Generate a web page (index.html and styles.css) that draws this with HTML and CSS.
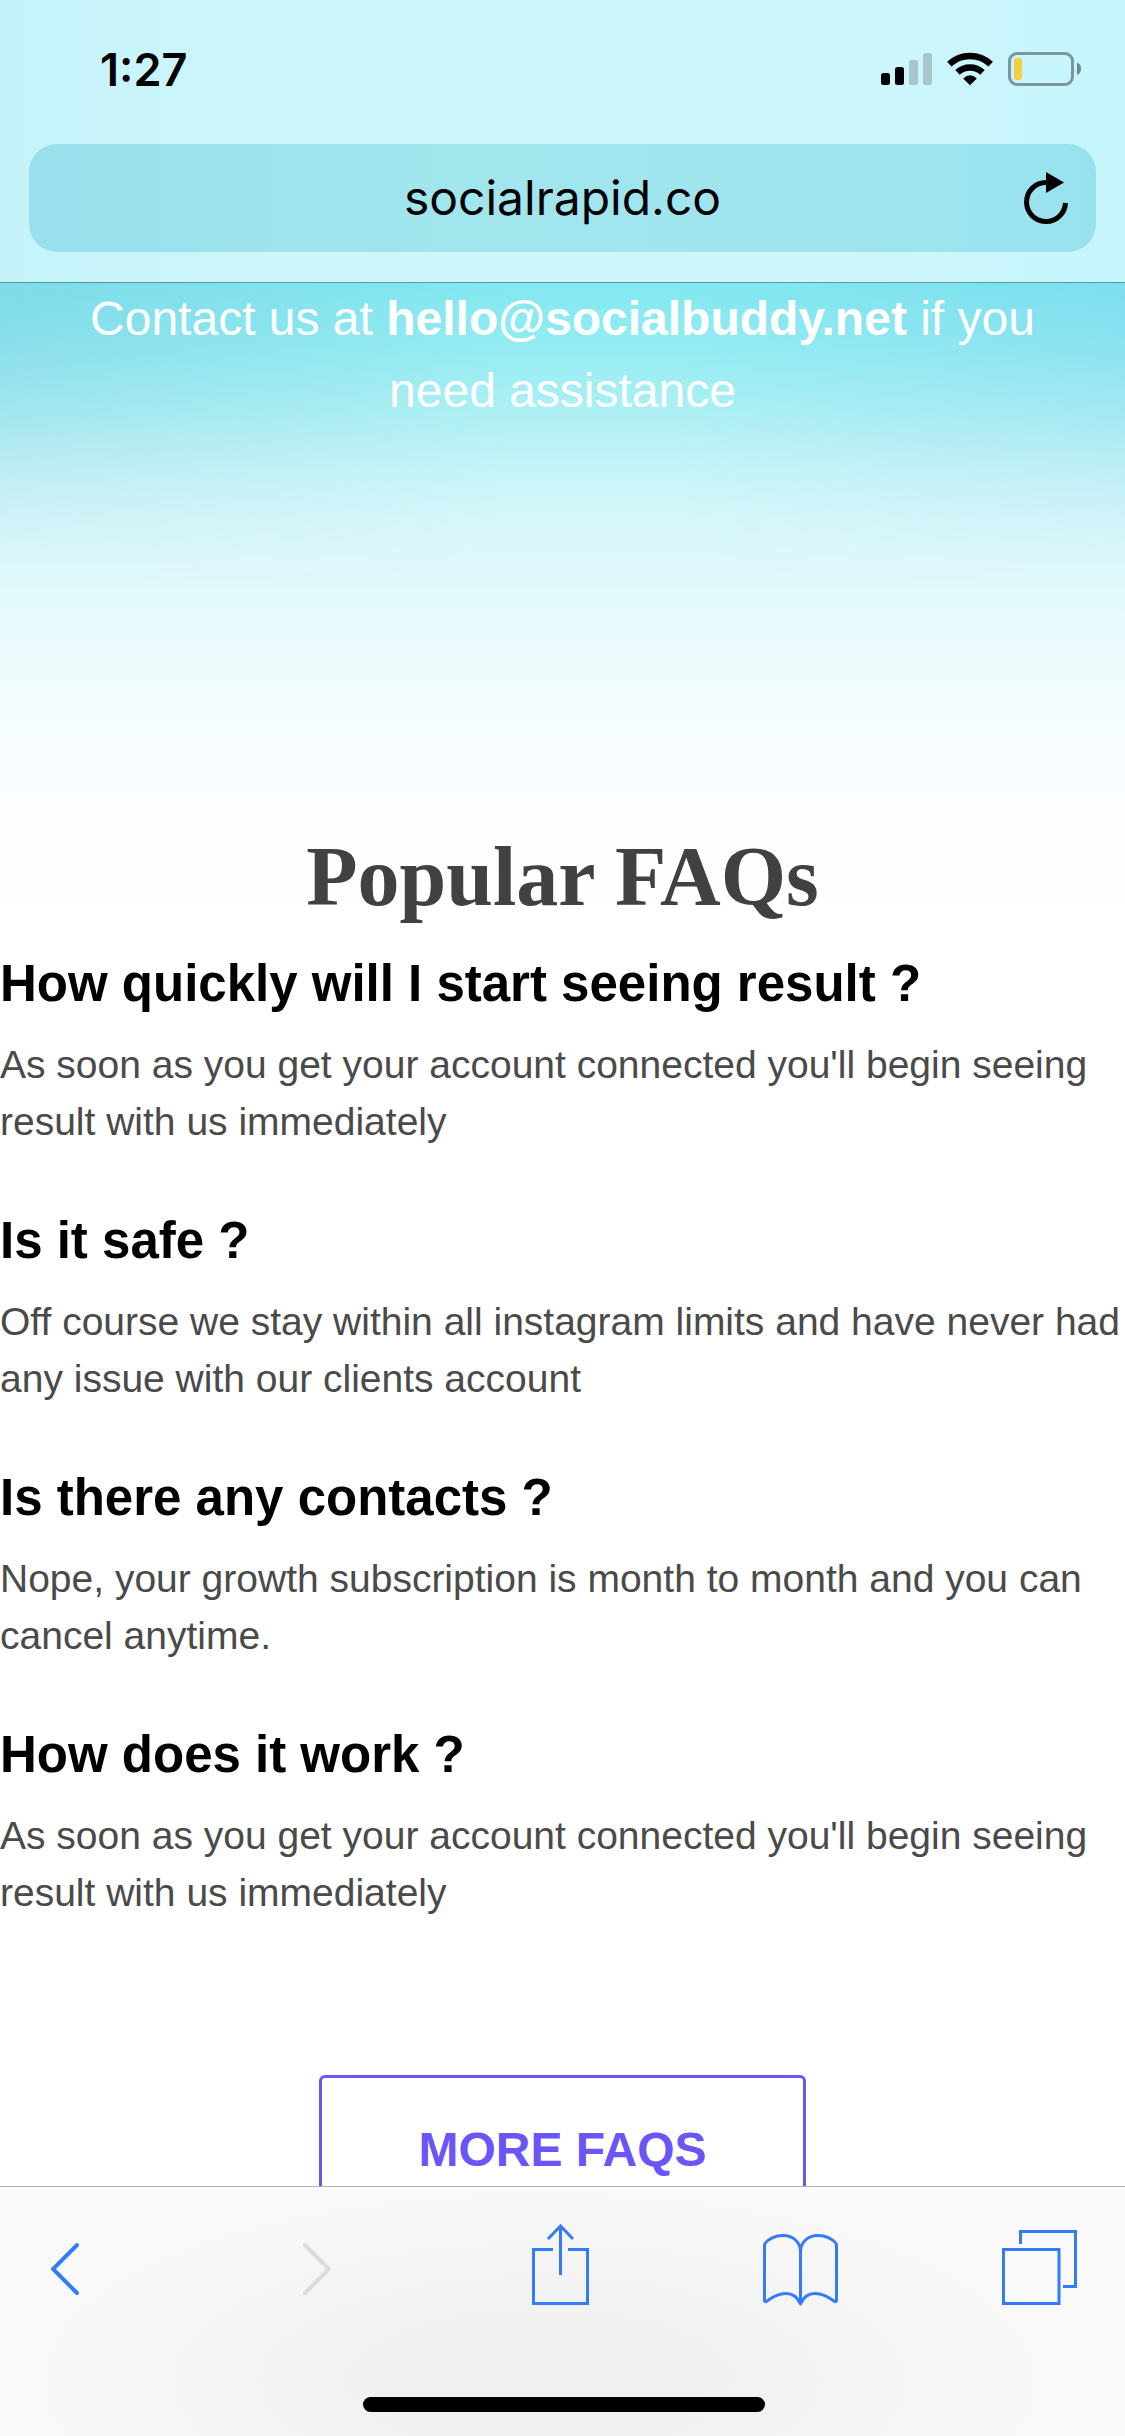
FILE: index.html
```html
<!DOCTYPE html>
<html lang="en">
<head>
<meta charset="utf-8">
<meta name="viewport" content="width=device-width, initial-scale=1">
<title>Popular FAQs</title>
<link rel="stylesheet" href="styles.css">
</head>
<body class="screen">
<header class="browser-top">
  <div class="status-bar">
    <time class="clock">1:27</time>
    <div class="status-icons">
      <svg width="51" height="34" viewBox="0 0 51 34" role="img" aria-label="Signal">
        <rect x="0" y="21" width="9" height="12" rx="2.5"/>
        <rect x="14" y="15" width="9" height="18" rx="2.5"/>
        <g fill="#a5c6cb"><rect x="28" y="8" width="9" height="25" rx="2.5"/><rect x="42" y="1" width="9" height="32" rx="2.5"/></g>
      </svg>
      <svg width="46" height="34" viewBox="0 0 46 34" role="img" aria-label="Wi-Fi">
        <g fill="none" stroke="#000" stroke-width="6.5"><path d="M2.3 12.2A30 30 0 0 1 43.700 12.200"/><path d="M10.500 20.300A18.500 18.500 0 0 1 35.500 20.300"/></g>
        <path d="M16.200 26.500Q23 20.200 29.800 26.500L23 33.300Z"/>
      </svg>
      <svg width="73" height="34" viewBox="0 0 73 34" role="img" aria-label="Battery low">
        <rect x="1.500" y="1.500" width="63" height="31" rx="7.500" fill="none" stroke="#7b979b" stroke-width="3"/>
        <rect x="6" y="6" width="8" height="22" rx="3" fill="#f8cd46"/>
        <path d="M69 10.500Q73 12 73 16.800T69 23Z" fill="#6f8b8f"/>
      </svg>
    </div>
  </div>
  <form class="address-bar">
    <input class="address" type="text" value="socialrapid.co" aria-label="Address">
    <button class="reload" type="button" aria-label="Reload">
      <svg width="44" height="52" viewBox="0 0 44 52"><path d="M23 10.500H22A19.500 19.500 0 1 0 41.500 31" fill="none" stroke="#000" stroke-width="5"/><path d="M22 0L40 10.500L22 21Z"/></svg>
    </button>
  </form>
</header>

<main class="page">
  <p class="contact">Contact us at <a class="contact-mail" href="mailto:hello@socialbuddy.net">hello@socialbuddy.net</a> if you need assistance</p>
  <section class="faqs">
    <h2 class="faqs-title">Popular FAQs</h2>
    <article class="faq">
      <h3 class="question">How quickly will I start seeing result ?</h3>
      <p class="answer">As soon as you get your account connected you'll begin seeing result with us immediately</p>
    </article>
    <article class="faq">
      <h3 class="question">Is it safe ?</h3>
      <p class="answer">Off course we stay within all instagram limits and have never had any issue with our clients account</p>
    </article>
    <article class="faq">
      <h3 class="question">Is there any contacts ?</h3>
      <p class="answer">Nope, your growth subscription is month to month and you can cancel anytime.</p>
    </article>
    <article class="faq">
      <h3 class="question">How does it work ?</h3>
      <p class="answer">As soon as you get your account connected you'll begin seeing result with us immediately</p>
    </article>
    <button class="more" type="button">MORE FAQS</button>
  </section>
</main>

<footer class="browser-bottom">
  <nav class="toolbar" aria-label="Browser">
    <button class="tool" type="button" aria-label="Back">
      <svg width="28" height="82" viewBox="0 0 28 82"><path d="M26 21L2 45L26 69" stroke-width="4" stroke-linecap="round"/></svg>
    </button>
    <button class="tool" type="button" aria-label="Forward" disabled>
      <svg width="28" height="82" viewBox="0 0 28 82"><path d="M2 21L26 45L2 69" stroke-width="4" stroke-linecap="round"/></svg>
    </button>
    <button class="tool" type="button" aria-label="Share">
      <svg width="57" height="82" viewBox="0 0 57 82"><path d="M21 25.500H1.500V79.500H55.500V25.500H36M28.500 51V2M16 15L28.500 2L41 15"/></svg>
    </button>
    <button class="tool" type="button" aria-label="Bookmarks">
      <svg width="75" height="82" viewBox="0 0 75 82"><path stroke-linejoin="round" d="M37.500 80V28C37.500 18 30 11.500 20 11.500C12 11.500 5 15 2 19.500Q1.500 20.500 1.500 22V76.500Q1.500 78.500 4 77C10 72.500 17 69.500 23 69.500C31 69.500 35 74 37.500 80C40 74 44 69.500 52 69.500C58 69.500 65 72.500 71 77Q73.500 78.500 73.500 76.500V22Q73.500 20.500 73 19.500C70 15 63 11.500 55 11.500C45 11.500 37.500 18 37.500 28"/></svg>
    </button>
    <button class="tool" type="button" aria-label="Tabs">
      <svg width="75" height="82" viewBox="0 0 75 82"><path d="M1.500 25.500H57V79.500H1.500ZM18.500 20V7.500H73.500V62.500H61"/></svg>
    </button>
  </nav>
  <div class="home-indicator"></div>
</footer>
</body>
</html>
```
FILE: styles.css
```css
* {
  box-sizing: border-box;
}

.screen {
  margin: 0;
  height: 100vh;
  display: flex;
  flex-direction: column;
  background: #fff;
  color: #000;
  font-family: "Liberation Sans", Arial, Helvetica, sans-serif;
}

button {
  border: 0;
  padding: 0;
  background: none;
  font: inherit;
}

svg {
  display: block;
}

/* Status bar and address field */
.browser-top {
  flex: none;
  padding-bottom: 30px;
  border-bottom: 1px solid #529ba2;
  background: linear-gradient(90deg, #c6f3fa, #cdf6fb 28%, #cdf6fb 75%, #c6f5fc);
  font-family: Inter, sans-serif;
}

.status-bar {
  display: flex;
  justify-content: space-between;
  align-items: center;
  height: 144px;
  padding: 0 44px 6px 100px;
}

.clock {
  font-size: 45px;
  font-weight: 600;
}

.status-icons {
  display: flex;
  gap: 15px;
}

.address-bar {
  display: flex;
  align-items: center;
  height: 108px;
  margin: 0 29px;
  padding: 0 28px;
  border-radius: 28px;
  background: linear-gradient(90deg, #99e0ec, #a1e5ed 40%, #a0e5ee 75%, #98e2ef);
}

.address {
  flex: 1;
  min-width: 0;
  height: 60px;
  border: 0;
  padding: 0 0 0 44px;
  background: none;
  color: #000;
  font: 400 48px/60px Inter, sans-serif;
  text-align: center;
}

/* Page content */
.page {
  position: relative;
  isolation: isolate;
  flex: 1;
  min-height: 0;
  overflow: hidden;
  background: linear-gradient(#83e8f0, #90ebf2 50px, #b0f0f5 137px, #c6f4f8 187px, #d7f6fa 237px, #e4f9fc 317px, #edfbfd 377px, #f5fdfe 437px, #fbfdff 517px, #fff 660px);
}

/* Cooler tint toward both edges of the sky */
.page::before {
  content: "";
  position: absolute;
  z-index: -1;
  inset: 0 0 auto;
  height: 300px;
  background: linear-gradient(90deg, rgba(95, 165, 200, 0.18), rgba(95, 165, 200, 0) 45%, rgba(95, 170, 230, 0) 60%, rgba(95, 175, 230, 0.16));
  mask-image: linear-gradient(#000 20%, transparent);
}

.contact {
  margin: 0;
  padding: 0 60px;
  color: #fff;
  font-size: 48px;
  line-height: 72px;
  text-align: center;
}

.contact-mail {
  color: inherit;
  font-weight: 700;
  text-decoration: none;
}

.faqs {
  padding-top: 400px;
  text-align: center;
}

.faqs-title {
  margin: 0 0 18px;
  color: #414141;
  font: 700 84px/100px "Liberation Serif", "Times New Roman", serif;
}

.faq {
  margin-bottom: 52px;
  text-align: left;
}

.question {
  margin: 0 0 13px;
  font-size: 51px;
  line-height: 78px;
}

.answer {
  margin: 0;
  color: #4a4a4a;
  font-size: 39px;
  line-height: 57px;
}

.more {
  margin-top: 102px;
  padding: 36px 96px;
  border: 3px solid #6a55f7;
  border-radius: 6px;
  color: #6a55f7;
  font-size: 48px;
  font-weight: 700;
  line-height: 72px;
}

/* Bottom toolbar */
.browser-bottom {
  flex: none;
  padding: 37px 48px 24px 51px;
  border-top: 1px solid #b2b2b2;
  background: radial-gradient(ellipse 46% 78% at 48% 78%, #f0f0f0 25%, #f9f9f9);
}

.toolbar {
  display: grid;
  grid-template-columns: 252fr 229fr 231fr 239fr 75px;
}

.tool {
  justify-self: start;
  color: #347bf9;
}

.tool:disabled {
  color: #dcdcdc;
}

.tool svg {
  fill: none;
  stroke: currentColor;
  stroke-width: 3;
}

.home-indicator {
  width: 402px;
  height: 15px;
  margin: 91px auto 0;
  border-radius: 8px;
  background: #000;
}
```
